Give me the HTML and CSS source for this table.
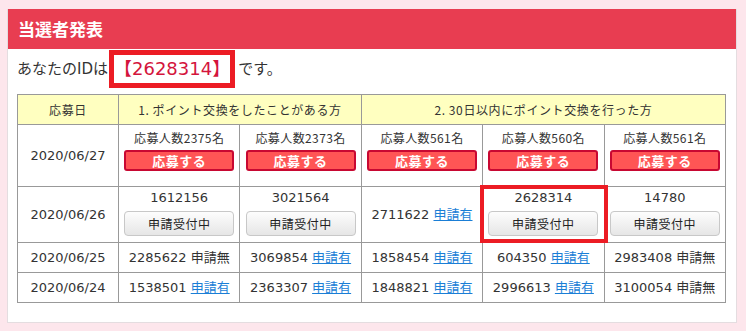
FILE: index.html
```
<!DOCTYPE html>
<html lang="ja">
<head>
    <meta charset="utf-8">
    <title>当選者発表</title>
    <link rel="stylesheet" href="styles.css">
</head>
<body>
    <div class="card">
        <h2 class="cardTitle">当選者発表</h2>
        <div class="cardBody">
            <p class="yourId">あなたのIDは<span class="idBox">【2628314】</span>です。</p>

            <table class="result">
                <colgroup>
                    <col class="colDate">
                    <col class="colItem">
                    <col class="colItem">
                    <col class="colItem">
                    <col class="colItem">
                    <col class="colItem">
                </colgroup>
                <tr class="head">
                    <th>応募日</th>
                    <th colspan="2">1. ポイント交換をしたことがある方</th>
                    <th colspan="3">2. 30日以内にポイント交換を行った方</th>
                </tr>
                <tr class="rowEntry">
                    <td>2020/06/27</td>
                    <td><div class="count">応募人数2375名</div><button class="applyBtn">応募する</button></td>
                    <td><div class="count">応募人数2373名</div><button class="applyBtn">応募する</button></td>
                    <td><div class="count">応募人数561名</div><button class="applyBtn">応募する</button></td>
                    <td><div class="count">応募人数560名</div><button class="applyBtn">応募する</button></td>
                    <td><div class="count">応募人数561名</div><button class="applyBtn">応募する</button></td>
                </tr>
                <tr class="rowOpen">
                    <td>2020/06/26</td>
                    <td><div class="num">1612156</div><button class="waitBtn">申請受付中</button></td>
                    <td><div class="num">3021564</div><button class="waitBtn">申請受付中</button></td>
                    <td>2711622 <a href="#">申請有</a></td>
                    <td class="mine"><div class="num">2628314</div><button class="waitBtn">申請受付中</button></td>
                    <td><div class="num">14780</div><button class="waitBtn">申請受付中</button></td>
                </tr>
                <tr>
                    <td>2020/06/25</td>
                    <td>2285622 申請無</td>
                    <td>3069854 <a href="#">申請有</a></td>
                    <td>1858454 <a href="#">申請有</a></td>
                    <td>604350 <a href="#">申請有</a></td>
                    <td>2983408 申請無</td>
                </tr>
                <tr>
                    <td>2020/06/24</td>
                    <td>1538501 <a href="#">申請有</a></td>
                    <td>2363307 <a href="#">申請有</a></td>
                    <td>1848821 <a href="#">申請有</a></td>
                    <td>2996613 <a href="#">申請有</a></td>
                    <td>3100054 申請無</td>
                </tr>
            </table>
        </div>
    </div>
</body>
</html>
```

FILE: styles.css
```
body {
    margin: 0;
    padding: 9px 9px 0 7px;
    background-color: #fde6ec;
    font-family: "DejaVu Sans", "Noto Sans CJK JP", sans-serif;
    color: #333;
}

.card {
    background-color: #fff;
    border: 1px solid #e4dde0;
    border-top: none;
}

.cardTitle {
    margin: 0;
    height: 40px;
    padding-left: 10px;
    background-color: #e83d51;
    color: #fff;
    font-family: "Noto Sans CJK JP", sans-serif;
    font-size: 17px;
    font-weight: bold;
    line-height: 40px;
}

.cardBody {
    padding: 1px 10px 19px 9px;
}

.yourId {
    margin: 0 0 6px 0;
    font-size: 15px;
    line-height: 38px;
    display: flex;
    align-items: center;
}

.idBox {
    display: inline-block;
    margin: 0 3px 0 1px;
    border: 5px solid #ec1c24;
    padding: 0;
    height: 28px;
    line-height: 28px;
    color: #d4143c;
    font-size: 18px;
}

.result {
    width: 709px;
    border-collapse: collapse;
    table-layout: fixed;
    font-size: 13px;
}

.colDate {
    width: 101px;
}

.result th,
.result td {
    border: 1px solid #999;
    text-align: center;
    padding: 0;
    height: 29px;
    line-height: 18px;
}

.result th {
    background-color: #ffffc0;
    font-family: "Noto Sans CJK JP", sans-serif;
    font-size: 12px;
    font-weight: normal;
    letter-spacing: 0.6px;
}

.rowEntry td {
    height: 61px;
}

.rowOpen td {
    height: 55px;
}

.result a {
    color: #1a7ed6;
}

.count {
    font-family: "Noto Sans CJK JP", sans-serif;
    font-size: 12px;
    letter-spacing: 0.4px;
    line-height: 18px;
    margin-bottom: 3px;
}

.num {
    line-height: 18px;
    margin-bottom: 4px;
}

.applyBtn {
    display: block;
    width: 110px;
    height: 21px;
    margin: 0 auto 11px;
    padding: 0;
    border: 2px solid #c80832;
    border-radius: 3px;
    background-color: #ff5555;
    color: #fff;
    font-family: "Noto Sans CJK JP", sans-serif;
    font-size: 13px;
    font-weight: bold;
    line-height: 17px;
    letter-spacing: 0.5px;
}

.waitBtn {
    display: block;
    width: 110px;
    height: 25px;
    margin: 0 auto 4px;
    padding: 0;
    border: 1px solid #c8c8c8;
    border-radius: 4px;
    background: linear-gradient(#fdfdfd, #e6e6e6);
    color: #222;
    font-family: "Noto Sans CJK JP", sans-serif;
    font-size: 12px;
    line-height: 23px;
    letter-spacing: 0.5px;
}

.mine {
    position: relative;
}

/* red frame drawn over the cell of the user's own id */
.mine::after {
    content: "";
    position: absolute;
    left: -3px;
    top: -2px;
    right: -4px;
    bottom: -1px;
    border: 4px solid #ec1c24;
    pointer-events: none;
}
```
